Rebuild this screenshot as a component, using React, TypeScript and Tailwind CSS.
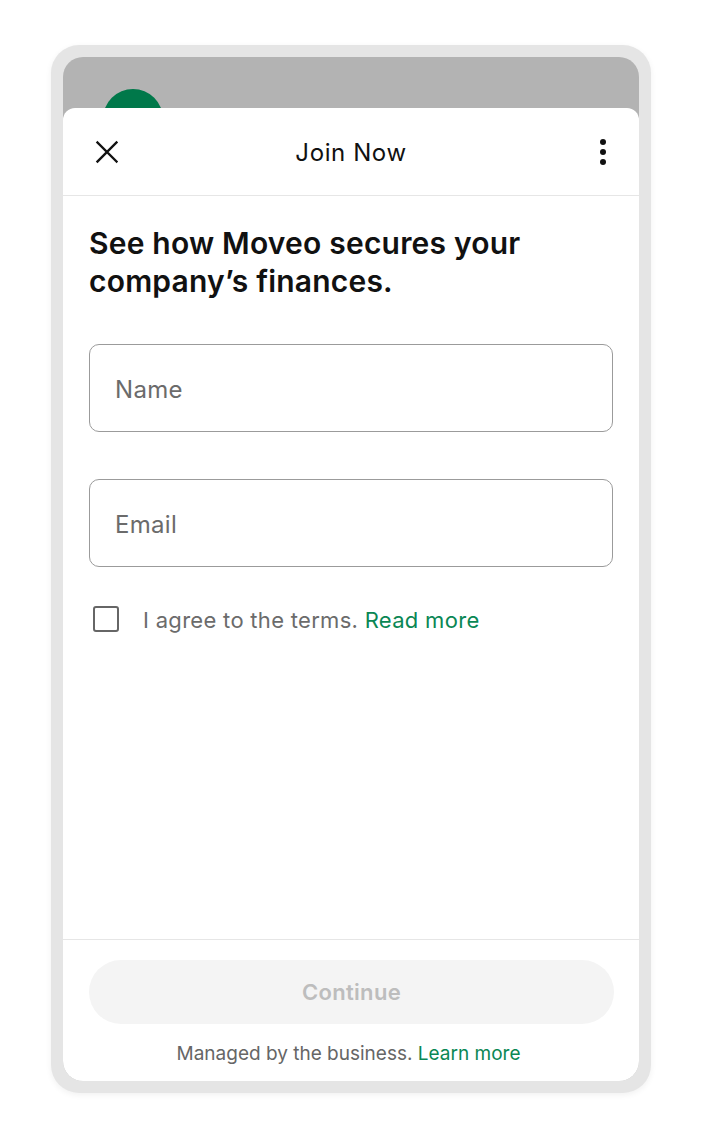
export default function App() {
  return (
    <div
      className="w-[702px] h-[1144px] bg-white pt-[45px] pl-[51px]"
      style={{ fontFamily: 'Inter, "Noto Sans", sans-serif' }}
    >
      <div className="w-[600px] h-[1048px] rounded-[28px] bg-[#e5e5e5] p-3 shadow-[0_2px_6px_rgba(0,0,0,0.06)]">
        <div className="h-full rounded-[20px] overflow-hidden bg-[#b3b3b3] flex flex-col">
          {/* backdrop behind the sheet */}
          <div className="h-[51px] shrink-0 pl-10 pt-8">
            <div className="w-[60px] h-[60px] rounded-full bg-[#00784a]" />
          </div>

          {/* sheet */}
          <div className="relative z-10 flex-1 flex flex-col bg-white rounded-t-[12px]">
            <header className="h-[88px] shrink-0 border-b border-[#e6e6e6] flex items-center justify-between px-8">
              <div className="w-10 flex justify-start">
                <button className="w-6 h-6 flex items-center justify-center text-[#111]">
                  <svg width="24" height="24" viewBox="0 0 24 24" fill="none" stroke="currentColor" strokeWidth={2.4} strokeLinecap="square">
                    <path d="M2.5 2.5l19 19M21.5 2.5l-19 19" />
                  </svg>
                </button>
              </div>
              <h1 className="text-[24px] leading-8 font-normal text-[#111] tracking-[0.6px] pt-[2px]">Join Now</h1>
              <div className="w-10 flex justify-end">
                <button className="w-2 h-7 flex flex-col items-center justify-between py-[1px]">
                  <span className="w-[6px] h-[6px] rounded-full bg-[#111]" />
                  <span className="w-[6px] h-[6px] rounded-full bg-[#111]" />
                  <span className="w-[6px] h-[6px] rounded-full bg-[#111]" />
                </button>
              </div>
            </header>

            <main className="flex-1 px-[26px] pt-[28px]">
              <h2 className="text-[30px] leading-[38px] font-semibold text-[#111] tracking-[0.2px]">
                See how Moveo secures your company’s finances.
              </h2>

              <div className="mt-[44px] flex flex-col gap-[47px]">
                <div className="h-[88px] rounded-[10px] border-[1.5px] border-[#9b9b9b] flex items-center px-[25px]">
                  <span className="text-[24px] leading-8 text-[#6b6b6b] tracking-[0.3px] pt-[3px]">Name</span>
                </div>
                <div className="h-[88px] rounded-[10px] border-[1.5px] border-[#9b9b9b] flex items-center px-[25px]">
                  <span className="text-[24px] leading-8 text-[#6b6b6b] tracking-[0.3px] pt-[3px]">Email</span>
                </div>
              </div>

              <div className="mt-[37px] flex items-center pl-1">
                <span className="w-[26px] h-[26px] rounded-[3px] border-2 border-[#666] shrink-0" />
                <p className="ml-6 text-[22px] leading-7 text-[#6b6b6b] tracking-[0.3px] pt-[2px]">
                  I agree to the terms. <span className="text-[#0a8754]">Read more</span>
                </p>
              </div>
            </main>

            <footer className="shrink-0 border-t border-[#e6e6e6] pt-5 pb-[15px] pl-[26px] pr-[25px] flex flex-col items-center">
              <button className="w-full h-16 rounded-full bg-[#f4f4f4] text-[22px] font-semibold text-[#bdbdbd] tracking-[0.3px]">
                Continue
              </button>
              <p className="mt-[18px] text-[19px] leading-6 text-[#666] pr-[6px]">
                Managed by the business. <span className="text-[#0a8754]">Learn more</span>
              </p>
            </footer>
          </div>
        </div>
      </div>
    </div>
  )
}
